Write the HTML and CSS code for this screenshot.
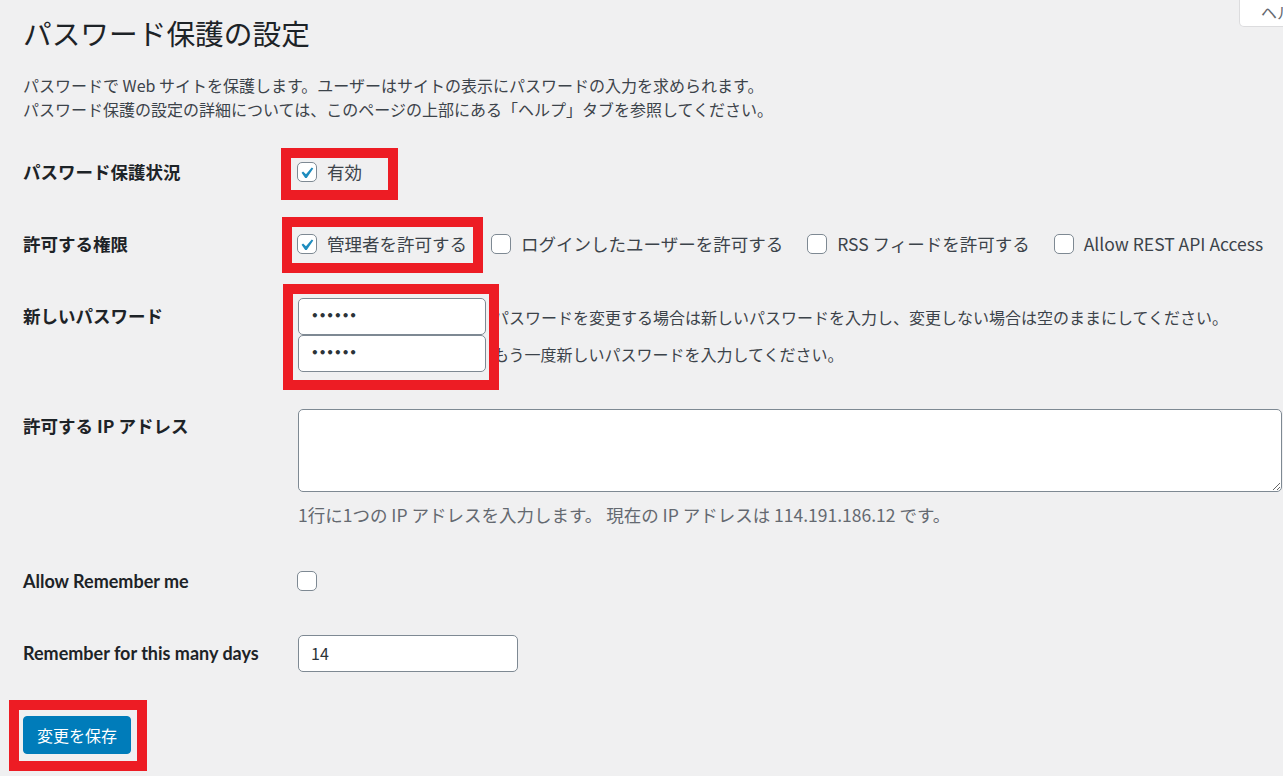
FILE: index.html
```html
<!DOCTYPE html>
<html lang="ja">
<head>
  <meta charset="UTF-8">
  <title>パスワード保護の設定</title>
  <link rel="stylesheet" href="styles.css">
</head>
<body>
  <div class="help-tab">ヘルプ</div>
  <div class="wrap">
    <h1 class="title">パスワード保護の設定</h1>
    <p class="intro">
      パスワードで Web サイトを保護します。ユーザーはサイトの表示にパスワードの入力を求められます。<br>
      パスワード保護の設定の詳細については、このページの上部にある「ヘルプ」タブを参照してください。
    </p>

    <div class="settings">
      <div class="row">
        <div class="label">パスワード保護状況</div>
        <div class="field">
          <label class="opt"><span class="cb checked"><svg viewBox="2.6 0.9 16 16"><path d="M14.83 4.89l1.34.94-5.81 8.38H9.02L5.78 9.67l1.34-1.25 2.57 2.4z"/></svg></span>有効</label>
        </div>
      </div>

      <div class="row">
        <div class="label">許可する権限</div>
        <div class="field">
          <label class="opt"><span class="cb checked"><svg viewBox="2.6 0.9 16 16"><path d="M14.83 4.89l1.34.94-5.81 8.38H9.02L5.78 9.67l1.34-1.25 2.57 2.4z"/></svg></span>管理者を許可する</label>
          <label class="opt"><span class="cb"></span>ログインしたユーザーを許可する</label>
          <label class="opt"><span class="cb"></span>RSS フィードを許可する</label>
          <label class="opt"><span class="cb"></span>Allow REST API Access</label>
        </div>
      </div>

      <div class="row">
        <div class="label">新しいパスワード</div>
        <div class="field stack">
          <div class="pw-line">
            <div class="input pw">••••••</div>
            <span class="pw-note">パスワードを変更する場合は新しいパスワードを入力し、変更しない場合は空のままにしてください。</span>
          </div>
          <div class="pw-line">
            <div class="input pw">••••••</div>
            <span class="pw-note">もう一度新しいパスワードを入力してください。</span>
          </div>
        </div>
      </div>

      <div class="row">
        <div class="label">許可する IP アドレス</div>
        <div class="field stack">
          <textarea class="ip-list"></textarea>
          <p class="description">1行に1つの IP アドレスを入力します。 現在の IP アドレスは 114.191.186.12 です。</p>
        </div>
      </div>

      <div class="row">
        <div class="label latin">Allow Remember me</div>
        <div class="field">
          <span class="cb"></span>
        </div>
      </div>

      <div class="row">
        <div class="label latin">Remember for this many days</div>
        <div class="field">
          <div class="input days">14</div>
        </div>
      </div>
    </div>

    <button class="save">変更を保存</button>

    <!-- annotation boxes -->
    <div class="mark mark-status"></div>
    <div class="mark mark-role"></div>
    <div class="mark mark-pass"></div>
    <div class="mark mark-save"></div>
  </div>
</body>
</html>
```

FILE: styles.css
```css
html, body {
  margin: 0;
  padding: 0;
}
body {
  background-color: #f0f0f1;
  color: #3c434a;
  font-family: "Noto Sans CJK JP", "Noto Sans", sans-serif;
  font-size: 16px;
  overflow: hidden;
  width: 1283px;
  height: 776px;
  position: relative;
}

.help-tab {
  position: absolute;
  top: 0;
  left: 1239px;
  width: 80px;
  height: 26px;
  padding-left: 21px;
  background: #fff;
  border: 1px solid #dcdcde;
  border-top: 0;
  border-radius: 0 0 0 5px;
  color: #646970;
  font-size: 16px;
  line-height: 24px;
  white-space: nowrap;
}

.wrap {
  position: relative;
  padding-left: 23px;
}

.title {
  margin: 0;
  padding-top: 14px;
  font-size: 28.7px;
  line-height: 38px;
  font-weight: 400;
  color: #1d2327;
}

.intro {
  margin: 21px 0 0;
  line-height: 24px;
  color: #3c434a;
}

.settings {
  margin-top: 15px;
}
.row {
  display: grid;
  grid-template-columns: 275px 1fr;
  padding: 18px 0;
}
.label {
  font-size: 17.5px;
  font-weight: 700;
  line-height: 36px;
  color: #1d2327;
  white-space: nowrap;
}
.label.latin {
  font-family: Lato, "Noto Sans CJK JP", sans-serif;
  font-size: 18px;
}
.field {
  display: flex;
  align-items: center;
  min-height: 36px;
  white-space: nowrap;
}
.field.stack {
  flex-direction: column;
  align-items: flex-start;
}

.opt {
  display: flex;
  flex-shrink: 0;
  align-items: center;
  gap: 10px;
  margin-right: 25px;
  font-size: 17.5px;
  line-height: 36px;
  color: #3c434a;
}
.cb {
  box-sizing: border-box;
  display: block;
  flex-shrink: 0;
  width: 20px;
  height: 20px;
  margin-left: -1px;
  background: #fff;
  border: 1px solid #7e8993;
  border-radius: 5px;
}
.cb svg {
  display: block;
  width: 18px;
  height: 18px;
}
.cb svg path {
  fill: #1e8cbe;
}

.input {
  box-sizing: border-box;
  height: 37px;
  background: #fff;
  border: 1px solid #7e8993;
  border-radius: 5px;
  padding: 0 12px;
  line-height: 35px;
  color: #2c3338;
}
.pw-line {
  display: flex;
  align-items: center;
}
.input.pw {
  width: 188px;
  font-family: "DejaVu Sans", sans-serif;
  font-size: 12px;
  font-weight: 700;
  letter-spacing: 0;
}
.pw-note {
  margin-left: 7px;
  color: #3c434a;
}

.ip-list {
  box-sizing: border-box;
  display: block;
  width: calc(100% - 1px);
  height: 83px;
  margin: 1px 0 0;
  background: #fff;
  border: 1px solid #7e8993;
  border-radius: 5px;
  font: inherit;
}
.description {
  margin: 11px 0 0;
  font-size: 17.5px;
  line-height: 24px;
  color: #646970;
}

.input.days {
  width: 220px;
  font-size: 16px;
}

.save {
  display: block;
  margin-top: 26px;
  height: 38px;
  padding: 0 13px;
  background: #007cba;
  border: 1px solid #007cba;
  border-radius: 4px;
  color: #fff;
  font-family: inherit;
  font-size: 16px;
}

.mark {
  position: absolute;
  border: 10px solid #ed1c24;
  box-sizing: border-box;
}
.mark-status {
  left: 281px;
  top: 148px;
  width: 117px;
  height: 52px;
}
.mark-role {
  left: 282px;
  top: 217px;
  width: 201px;
  height: 56px;
}
.mark-pass {
  left: 283px;
  top: 284px;
  width: 216px;
  height: 106px;
}
.mark-save {
  left: 9px;
  top: 700px;
  width: 138px;
  height: 71px;
}
```
